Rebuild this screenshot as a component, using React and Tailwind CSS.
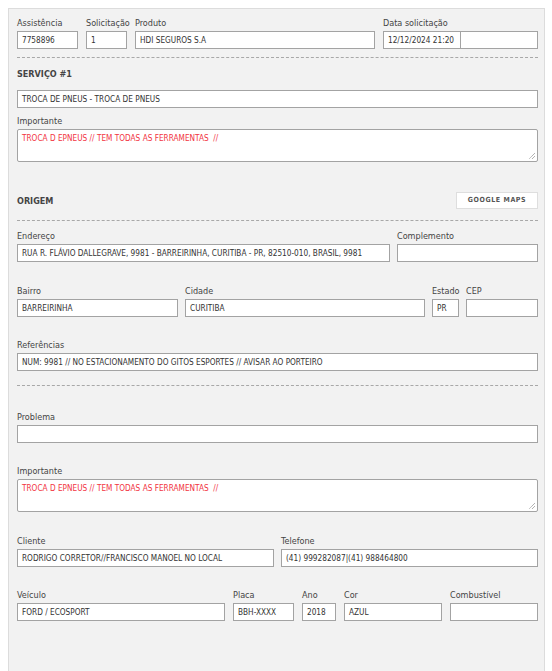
import React from "react";

const font = { fontFamily: '"DejaVu Sans Condensed", "Liberation Sans", sans-serif' };

const Label = ({ children }) => (
  <div className="h-[12px] mb-[2px] text-[9px] leading-[12px] text-[#444] whitespace-nowrap">
    {children}
  </div>
);

const Field = ({ label, value = "", className = "" }) => (
  <div className={`flex flex-col ${className}`}>
    <Label>{label}</Label>
    <div className="h-[18px] bg-white border border-[#a3a3a3] px-[4px] flex items-center text-[8.2px] text-[#333] whitespace-nowrap overflow-hidden">
      {value}
    </div>
  </div>
);

const Area = ({ label, value }) => (
  <div className="flex flex-col">
    <Label>{label}</Label>
    <div className="relative h-[33px] bg-white border border-[#a3a3a3] rounded-[2px] px-[4px] pt-[3px] text-[8.2px] leading-[10px] text-[#f2353f] whitespace-pre">
      {value}
      <svg className="absolute right-[1px] bottom-[1px]" width="8" height="8" viewBox="0 0 8 8">
        <path d="M7 1L1 7M7 4L4 7" stroke="#777" strokeWidth="0.8" strokeDasharray="1 0.6" />
      </svg>
    </div>
  </div>
);

const Dashed = ({ className = "" }) => (
  <div className={`border-t border-dashed border-[#a8a8a8] ${className}`} />
);

const Heading = ({ children }) => (
  <div className="text-[9px] font-bold text-[#444] leading-[14px]">{children}</div>
);

export default function App() {
  const importante = "TROCA D EPNEUS // TEM TODAS AS FERRAMENTAS  //";
  return (
    <div className="w-[552px] h-[671px] bg-white overflow-hidden pt-[8px] pl-[8px]" style={font}>
      <div className="w-[537px] h-[680px] bg-[#f2f2f2] border border-[#dcdcdc] pt-[8px] pl-[8px] pr-[6px]">
        <div className="flex gap-[8px]">
          <Field label="Assistência" value="7758896" className="w-[61px]" />
          <Field label="Solicitação" value="1" className="w-[41px]" />
          <Field label="Produto" value="HDI SEGUROS S.A" className="flex-1" />
          <div className="flex flex-col w-[155px]">
            <Label>Data solicitação</Label>
            <div className="flex">
              <div className="w-[78px] h-[18px] bg-white border border-[#a3a3a3] px-[4px] flex items-center text-[8.2px] text-[#333]">
                12/12/2024 21:20
              </div>
              <div className="flex-1 h-[18px] bg-white border border-l-0 border-[#a3a3a3]" />
            </div>
          </div>
        </div>

        <Dashed className="mt-[8px]" />
        <div className="mt-[9px]">
          <Heading>SERVIÇO #1</Heading>
        </div>
        <div className="mt-[9px]">
          <div className="h-[18px] bg-white border border-[#a3a3a3] px-[4px] flex items-center text-[8.2px] text-[#333]">
            TROCA DE PNEUS - TROCA DE PNEUS
          </div>
        </div>
        <div className="mt-[7px]">
          <Area label="Importante" value={importante} />
        </div>

        <div className="mt-[30px] flex items-center justify-between h-[17px]">
          <Heading>ORIGEM</Heading>
          <button className="w-[82px] h-[17px] bg-white border border-[#dedede] text-[7px] font-bold tracking-[0.6px] text-[#555]">
            GOOGLE MAPS
          </button>
        </div>
        <Dashed className="mt-[11px]" />

        <div className="mt-[9px] flex gap-[7px]">
          <Field label="Endereço" value="RUA R. FLÁVIO DALLEGRAVE, 9981 - BARREIRINHA, CURITIBA - PR, 82510-010, BRASIL, 9981" className="w-[373px]" />
          <Field label="Complemento" className="flex-1" />
        </div>

        <div className="mt-[23px] flex gap-[7px]">
          <Field label="Bairro" value="BARREIRINHA" className="w-[161px]" />
          <Field label="Cidade" value="CURITIBA" className="w-[240px]" />
          <Field label="Estado" value="PR" className="w-[27px]" />
          <Field label="CEP" className="flex-1" />
        </div>

        <div className="mt-[22px]">
          <Field label="Referências" value="NUM: 9981 // NO ESTACIONAMENTO DO GITOS ESPORTES // AVISAR AO PORTEIRO" />
        </div>

        <Dashed className="mt-[14px]" />

        <div className="mt-[25px]">
          <Field label="Problema" />
        </div>

        <div className="mt-[22px]">
          <Area label="Importante" value={importante} />
        </div>

        <div className="mt-[23px] flex gap-[7px]">
          <Field label="Cliente" value="RODRIGO CORRETOR//FRANCISCO MANOEL NO LOCAL" className="w-[257px]" />
          <Field label="Telefone" value="(41) 999282087|(41) 988464800" className="flex-1" />
        </div>

        <div className="mt-[22px] flex gap-[8px]">
          <Field label="Veículo" value="FORD / ECOSPORT" className="w-[208px]" />
          <Field label="Placa" value="BBH-XXXX" className="w-[61px]" />
          <Field label="Ano" value="2018" className="w-[34px]" />
          <Field label="Cor" value="AZUL" className="w-[98px]" />
          <Field label="Combustível" className="flex-1" />
        </div>
      </div>
    </div>
  );
}
